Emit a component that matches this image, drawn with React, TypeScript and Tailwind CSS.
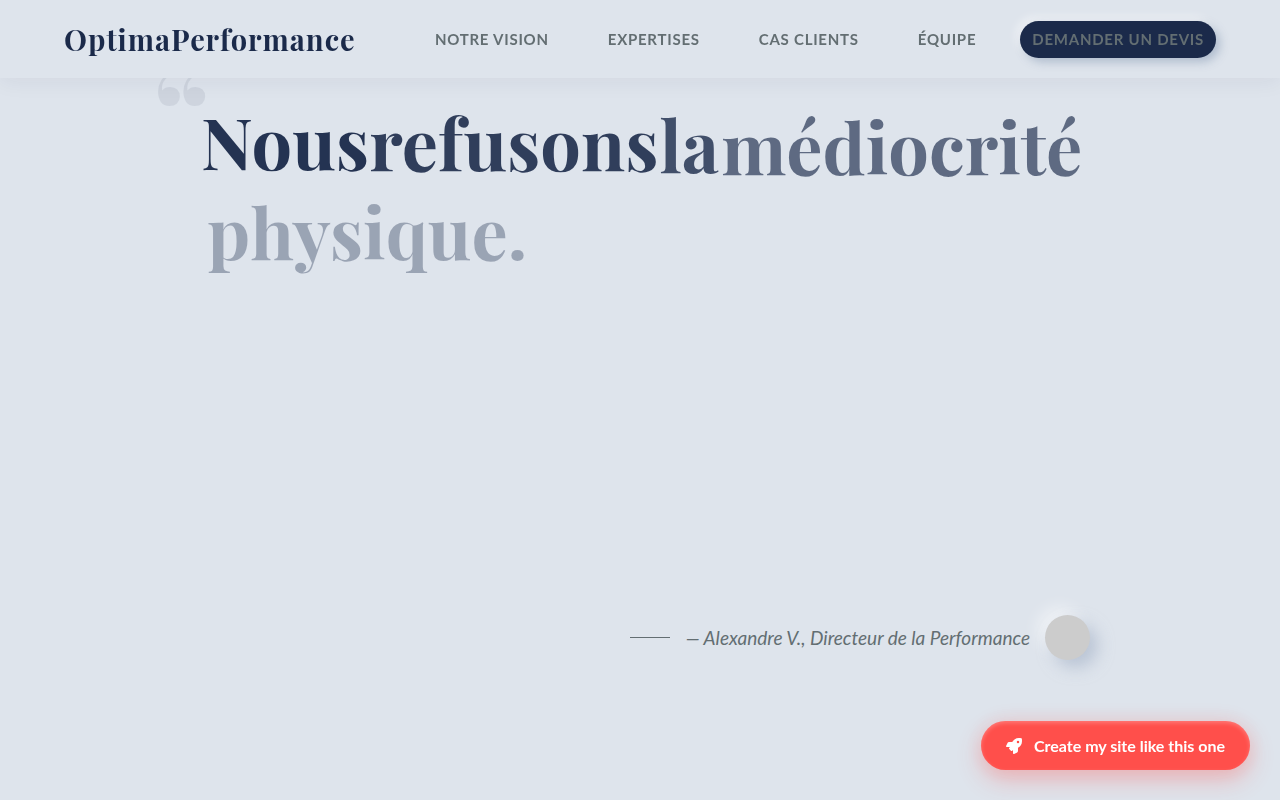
import { FaRocket } from 'react-icons/fa';

const NAV_LINKS = ['Notre vision', 'Expertises', 'Cas clients', 'Équipe'];

// progress of the reveal animation, word by word
const WORDS = [
  { text: 'Nous', progress: 0.95 },
  { text: 'refusons', progress: 0.89 },
  { text: 'la', progress: 0.8 },
  { text: 'médiocrité', progress: 0.65 },
  { text: 'physique.', progress: 0.34 }
];

const Header = () => {
  return (
    <header className="fixed inset-x-0 top-0 z-20 flex items-center justify-between bg-[#dee4ec] px-[5%] py-5 shadow-[0_4px_20px_rgba(27,42,74,0.06)]">
      <a
        href="#"
        className="font-['Playfair_Display','Liberation_Serif',serif] text-[29px] leading-[38px] font-bold tracking-[1px] text-[#1b2a4a]">
        OptimaPerformance
      </a>
      <nav className="flex items-center gap-[29px] text-[15px] leading-[17px] font-bold tracking-wider text-[#636e72] uppercase">
        {NAV_LINKS.map((label) => (
          <a
            key={label}
            href="#"
            className="px-[15px] py-[10px]">
            {label}
          </a>
        ))}
        <a
          href="#"
          className="rounded-full bg-[#1b2a4a] px-3 py-[10px] shadow-[4px_4px_10px_rgba(163,177,198,0.8),-4px_-4px_10px_rgba(255,255,255,0.5)]">
          Demander un devis
        </a>
      </nav>
    </header>
  );
};

const Quote = () => {
  return (
    <section className="mx-auto max-w-[900px] pt-[100px]">
      <blockquote className="relative min-h-[515px] pl-[10px] font-['Playfair_Display','Liberation_Serif',serif] font-bold text-[#1b2a4a]">
        <span
          aria-hidden="true"
          className="absolute -top-[46px] -left-9 text-[110px] leading-none font-black opacity-[0.08]">
          “
        </span>
        <p className="flex flex-wrap text-[72px] leading-[79px]">
          {WORDS.map(({ text, progress }) => (
            <span
              key={text}
              style={{
                opacity: progress,
                transform: `translate(${Math.round((1 - progress) * 10)}px, ${Math.round((1 - progress) * 18)}px)`
              }}>
              {text}
            </span>
          ))}
        </p>
      </blockquote>
      <div className="flex items-center justify-end text-[19px] leading-6 text-[#636e72] italic">
        <span className="mr-4 h-px w-10 bg-[#636e72]" />
        <cite>— Alexandre V., Directeur de la Performance</cite>
        <span className="ml-[15px] size-[45px] rounded-full bg-[#ccc] shadow-[8px_8px_16px_rgba(163,177,198,0.6),-8px_-8px_16px_rgba(255,255,255,0.5)]" />
      </div>
    </section>
  );
};

export default function App() {
  return (
    <div className="min-h-screen bg-[#dee4ec] font-['Lato',sans-serif]">
      <Header />
      <main>
        <Quote />
      </main>
      <button
        type="button"
        className="fixed right-[30px] bottom-[30px] z-30 flex items-center gap-3 rounded-full bg-[#ff4f4b] px-[25px] py-[15px] text-base leading-[19px] font-bold text-white shadow-[0_10px_25px_rgba(255,79,75,0.3),0_0_20px_rgba(255,79,75,0.12),inset_0_2px_4px_rgba(255,255,255,0.25)]">
        <FaRocket size={16} />
        Create my site like this one
      </button>
    </div>
  );
}
